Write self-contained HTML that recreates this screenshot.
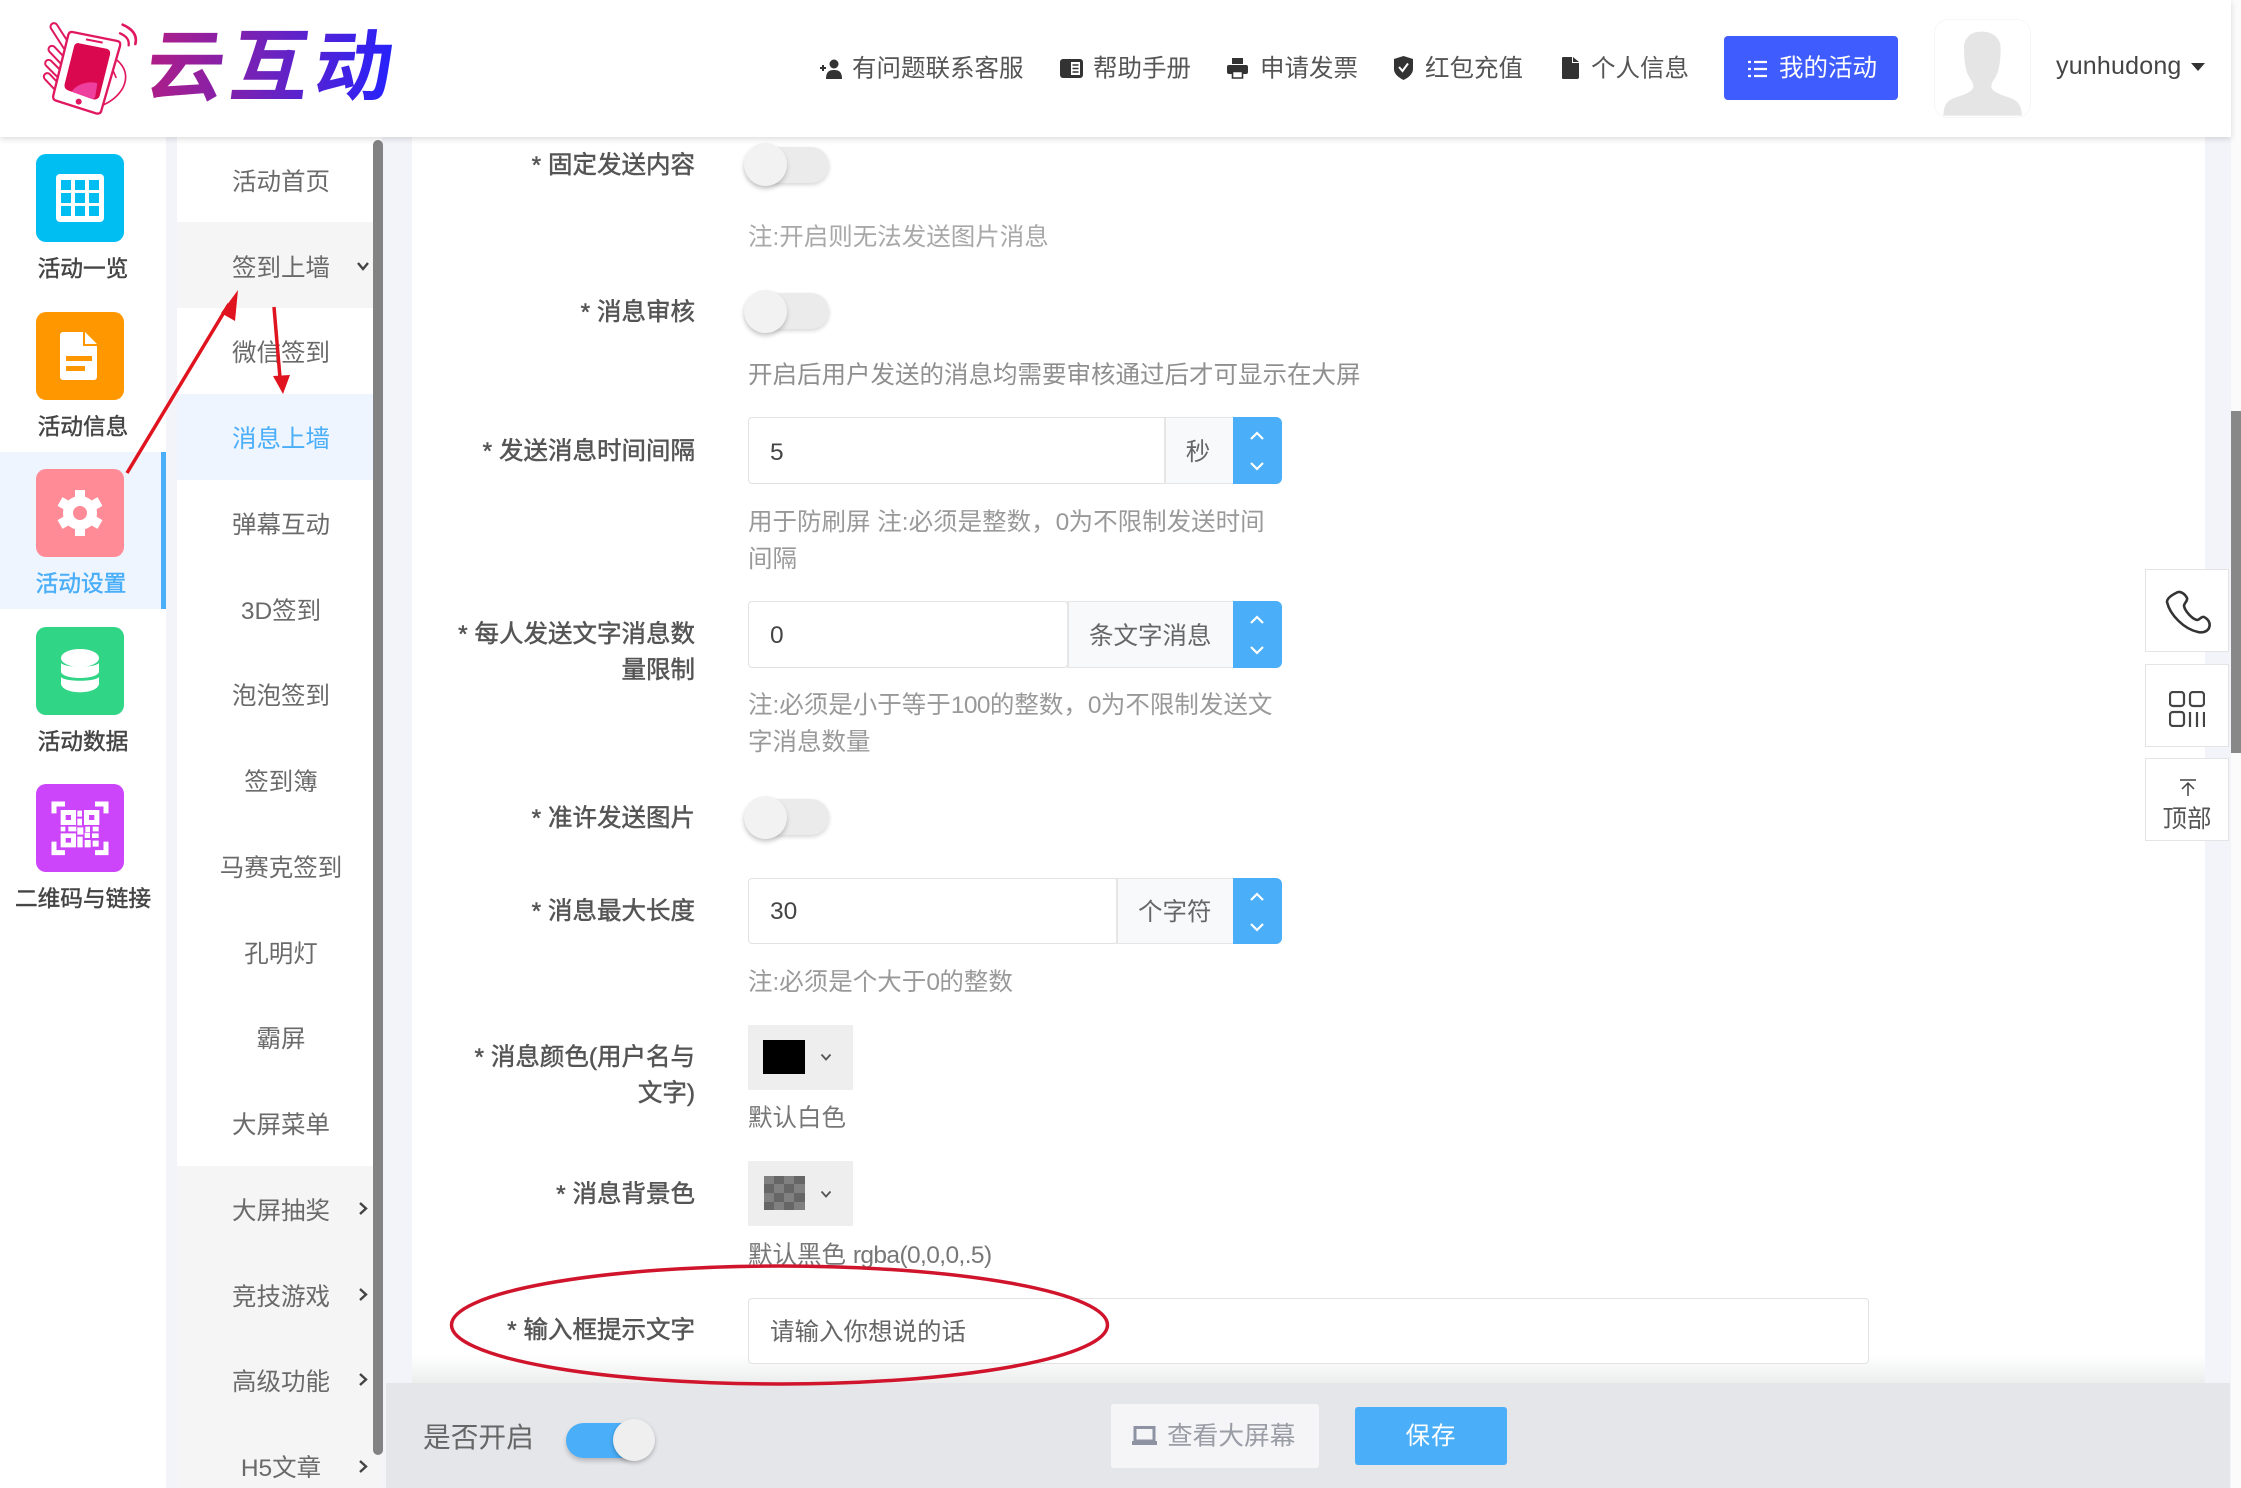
<!DOCTYPE html>
<html lang="zh-CN"><head><meta charset="utf-8"><title>云互动</title>
<style>
html,body{margin:0;padding:0;width:2241px;height:1488px;overflow:hidden;background:#f3f4f9}
body{position:relative;font-family:"Liberation Sans","Noto Sans CJK SC",sans-serif;font-size:24.5px;color:#666}
div,span,svg{position:absolute;box-sizing:border-box}
span.x{position:static;letter-spacing:-.6px}
.t{white-space:nowrap;transform:translateY(calc(-50% + 3px));line-height:1.3}
.c{text-align:center;transform:translate(-50%,calc(-50% + 3px))}
.l{color:#555;right:1546px;-webkit-text-stroke:.5px #555}
.n{color:#a8a8a8;left:748px}
.h{color:#555;transform:translateY(calc(-50% + 1.5px))}
.s{color:#444;-webkit-text-stroke:.45px #444;font-size:22.7px}
.m{color:#6a6a6a;left:281px}
.ic{width:88px;height:88px;left:36px;border-radius:10px}
.knob{width:43px;height:43px;border-radius:50%;background:#f2f2f2;box-shadow:0 3px 5px rgba(0,0,0,.2);left:744px}
.tr{width:83px;height:36px;border-radius:18px;background:#ebebeb;left:746px;box-shadow:0 2px 4px rgba(0,0,0,.16)}
.inp{background:#fff;border:1.5px solid #e2e2e2;border-radius:4px;left:748px}
.ad{background:#f8f9fb;border:1.5px solid #e6e6e6;border-left-width:2px;border-right:0}
.sp{background:#4aaef8;left:1233px;width:49px;border-radius:0 6px 6px 0}
.pk{background:#eeeeee;left:748px;width:105px}
.side{left:2145px;width:84px;height:83px;background:#fff;border:1.5px solid #e4e4e4}
</style></head><body>

<!-- main panel -->
<div style="left:412px;top:137px;width:1793px;height:1246px;background:#fff"></div>
<div style="left:412px;top:1355px;width:1793px;height:28px;background:linear-gradient(rgba(235,236,240,0),#eceded)"></div>

<!-- sidebar 1 -->
<div style="left:0;top:137px;width:166px;height:1351px;background:#fff"></div>
<div style="left:0;top:452px;width:166px;height:157px;background:#eef5fe"></div>
<div style="left:161px;top:452px;width:5px;height:157px;background:#4aaef8"></div>

<div class="ic" style="top:154px;background:#00bdf2"><svg style="left:20px;top:20px" width="48" height="48" viewBox="0 0 48 48"><rect width="48" height="48" rx="4" fill="#fff"/><g fill="#00bdf2"><rect x="5" y="6" width="10" height="10"/><rect x="19" y="6" width="10" height="10"/><rect x="33" y="6" width="10" height="10"/><rect x="5" y="19" width="10" height="10"/><rect x="19" y="19" width="10" height="10"/><rect x="33" y="19" width="10" height="10"/><rect x="5" y="32" width="10" height="10"/><rect x="19" y="32" width="10" height="10"/><rect x="33" y="32" width="10" height="10"/></g></svg></div>
<div class="t c s" style="left:83px;top:266px">活动一览</div>

<div class="ic" style="top:312px;background:#ff9800"><svg style="left:24px;top:20px" width="40" height="48" viewBox="0 0 40 48"><path d="M3 0H23V14H37V45a3 3 0 0 1-3 3H3a3 3 0 0 1-3-3V3a3 3 0 0 1 3-3z" fill="#fff"/><path d="M25 0L37 12H25z" fill="#fff"/><rect x="6" y="24" width="26" height="5" fill="#ff9800"/><rect x="6" y="34" width="19" height="5" fill="#ff9800"/></svg></div>
<div class="t c s" style="left:83px;top:424px">活动信息</div>

<div class="ic" style="top:469px;background:#ff8b97"><svg style="left:20px;top:20px" width="48" height="48" viewBox="0 0 48 48"><circle cx="24" cy="24" r="12" fill="none" stroke="#fff" stroke-width="10"/><g stroke="#fff" stroke-width="10"><path d="M24 1V9M24 39V47M4 12.500L11 16.500M37 31.500L44 35.500M4 35.500L11 31.500M37 16.500L44 12.500"/></g></svg></div>
<div class="t c" style="left:81px;top:581px;font-size:22.7px;color:#4aaef8;-webkit-text-stroke:.45px #4aaef8">活动设置</div>

<div class="ic" style="top:627px;background:#30d585"><svg style="left:24px;top:22px" width="40" height="44" viewBox="0 0 40 44"><g fill="#fff"><ellipse cx="20" cy="9" rx="19" ry="9"/><path d="M1 14c4 5 34 5 38 0v9c-2 8-36 8-38 0z"/><path d="M1 28c4 5 34 5 38 0v7c-2 11-36 11-38 0z"/></g></svg></div>
<div class="t c s" style="left:83px;top:739px">活动数据</div>

<div class="ic" style="top:784px;background:#cc45fb"><svg style="left:-16px;top:-14px" width="120" height="110" viewBox="0 0 360 330"><g fill="none" stroke="#fff" stroke-width="15"><path d="M102 130V102H135M225 102H258V130M102 215V248H135M225 248H258V215"/></g><path fill="#fff" fill-rule="evenodd" d="M122 120h46v45h-46zM137 135v15h16v-15zM192 120h46v45h-46zM207 135v15h16v-15zM172 122h14v18h-14zM172 146h14v20h-14zM122 190h46v42h-46zM137 204v14h16v-14zM122 170h14v14h-14zM145 170h24v14h-24zM172 172h18v22h-18zM196 170h14v16h-14zM218 170h18v14h-18zM172 200h16v32h-16zM194 188h16v16h-16zM216 190h20v14h-20zM194 210h18v22h-18zM218 212h18v18h-18z"/></svg></div>
<div class="t c s" style="left:83px;top:896px">二维码与链接</div>

<!-- sidebar 2 -->
<div style="left:177px;top:137px;width:205px;height:1351px;background:#fff"></div>
<div style="left:177px;top:222px;width:205px;height:86px;background:#f5f5f5"></div>
<div style="left:177px;top:394px;width:205px;height:86px;background:#eef5fe"></div>
<div style="left:177px;top:1166px;width:206px;height:322px;background:#f5f5f5"></div>
<div style="left:373px;top:140px;width:10px;height:1315px;background:#828282;border-radius:5px"></div>

<div class="t c m" style="top:180px">活动首页</div>
<div class="t c m" style="top:266px">签到上墙</div>
<div class="t c m" style="top:351px">微信签到</div>
<div class="t c m" style="top:437px;color:#4aaef8">消息上墙</div>
<div class="t c m" style="top:523px">弹幕互动</div>
<div class="t c m" style="top:609px">3D签到</div>
<div class="t c m" style="top:694px">泡泡签到</div>
<div class="t c m" style="top:780px">签到簿</div>
<div class="t c m" style="top:866px">马赛克签到</div>
<div class="t c m" style="top:952px">孔明灯</div>
<div class="t c m" style="top:1037px">霸屏</div>
<div class="t c m" style="top:1123px">大屏菜单</div>
<div class="t c m" style="top:1209px">大屏抽奖</div>
<div class="t c m" style="top:1295px">竞技游戏</div>
<div class="t c m" style="top:1380px">高级功能</div>
<div class="t c m" style="top:1466px">H5文章</div>
<svg style="left:357px;top:261px" width="12" height="10" viewBox="0 0 12 10"><path d="M1 2l5 6 5-6" fill="none" stroke="#444" stroke-width="2.400"/></svg>
<svg style="left:358px;top:1202px" width="10" height="13" viewBox="0 0 10 13"><path d="M2 1l6 5.500-6 5.500" fill="none" stroke="#444" stroke-width="2.400"/></svg>
<svg style="left:358px;top:1288px" width="10" height="13" viewBox="0 0 10 13"><path d="M2 1l6 5.500-6 5.500" fill="none" stroke="#444" stroke-width="2.400"/></svg>
<svg style="left:358px;top:1373px" width="10" height="13" viewBox="0 0 10 13"><path d="M2 1l6 5.500-6 5.500" fill="none" stroke="#444" stroke-width="2.400"/></svg>
<svg style="left:358px;top:1460px" width="10" height="13" viewBox="0 0 10 13"><path d="M2 1l6 5.500-6 5.500" fill="none" stroke="#444" stroke-width="2.400"/></svg>

<!-- form -->
<div class="t l" style="top:163px">* 固定发送内容</div>
<div class="tr" style="top:147px"></div><div class="knob" style="top:143px"></div>
<div class="t n" style="top:235px">注:开启则无法发送图片消息</div>

<div class="t l" style="top:310px">* 消息审核</div>
<div class="tr" style="top:293px"></div><div class="knob" style="top:290px"></div>
<div class="t n" style="top:373px;color:#8f8f8f">开启后用户发送的消息均需要审核通过后才可显示在大屏</div>

<div class="t l" style="top:449px">* 发送消息时间间隔</div>
<div class="inp" style="top:417px;width:420px;height:67px"></div>
<div class="t" style="left:770px;top:450px;color:#444">5</div>
<div class="ad" style="left:1164px;top:417px;width:70px;height:67px"></div>
<div class="t c" style="left:1198px;top:450px;color:#666">秒</div>
<div class="sp" style="top:417px;height:67px"><svg style="left:16px;top:14px" width="16" height="40" viewBox="0 0 16 40"><path d="M2 8l6-6 6 6M2 32l6 6 6-6" fill="none" stroke="#fff" stroke-width="2.200"/></svg></div>
<div class="t n" style="top:520px;color:#999">用于防刷屏 注:必须是整数，<span class="x">0</span>为不限制发送时间</div>
<div class="t n" style="top:557px;color:#999">间隔</div>

<div class="t l" style="top:632px">* 每人发送文字消息数</div>
<div class="t l" style="top:668px">量限制</div>
<div class="inp" style="top:601px;width:320px;height:67px"></div>
<div class="t" style="left:770px;top:633px;color:#444">0</div>
<div class="ad" style="left:1067px;top:601px;width:167px;height:67px"></div>
<div class="t" style="left:1089px;top:634px;color:#666">条文字消息</div>
<div class="sp" style="top:601px;height:67px"><svg style="left:16px;top:14px" width="16" height="40" viewBox="0 0 16 40"><path d="M2 8l6-6 6 6M2 32l6 6 6-6" fill="none" stroke="#fff" stroke-width="2.200"/></svg></div>
<div class="t n" style="top:703px;color:#999">注:必须是小于等于<span class="x">100</span>的整数，<span class="x">0</span>为不限制发送文</div>
<div class="t n" style="top:740px;color:#999">字消息数量</div>

<div class="t l" style="top:816px">* 准许发送图片</div>
<div class="tr" style="top:799px"></div><div class="knob" style="top:796px"></div>

<div class="t l" style="top:909px">* 消息最大长度</div>
<div class="inp" style="top:878px;width:370px;height:66px"></div>
<div class="t" style="left:770px;top:909px;color:#444">30</div>
<div class="ad" style="left:1116px;top:878px;width:118px;height:66px"></div>
<div class="t" style="left:1138px;top:910px;color:#666">个字符</div>
<div class="sp" style="top:878px;height:66px"><svg style="left:16px;top:14px" width="16" height="40" viewBox="0 0 16 40"><path d="M2 8l6-6 6 6M2 32l6 6 6-6" fill="none" stroke="#fff" stroke-width="2.200"/></svg></div>
<div class="t n" style="top:980px;color:#999">注:必须是个大于<span class="x">0</span>的整数</div>

<div class="t l" style="top:1055px">* 消息颜色(用户名与</div>
<div class="t l" style="top:1091px">文字)</div>
<div class="pk" style="top:1025px;height:65px"></div>
<div style="left:763px;top:1040px;width:42px;height:34px;background:#000"></div>
<svg style="left:820px;top:1053px" width="12" height="9" viewBox="0 0 12 9"><path d="M1.500 1.500L6 6.500l4.500-5" fill="none" stroke="#555" stroke-width="1.800"/></svg>
<div class="t n" style="top:1116px;color:#777">默认白色</div>

<div class="t l" style="top:1192px">* 消息背景色</div>
<div class="pk" style="top:1161px;height:65px"></div>
<svg style="left:764px;top:1176px" width="41" height="34" viewBox="0 0 41 34"><rect width="41" height="34" fill="#666"/><g fill="#808080"><rect x="0" y="0" width="10" height="8"/><rect x="20" y="0" width="10" height="8"/><rect x="10" y="8" width="10" height="9"/><rect x="30" y="8" width="11" height="9"/><rect x="0" y="17" width="10" height="9"/><rect x="20" y="17" width="10" height="9"/><rect x="10" y="26" width="10" height="8"/><rect x="30" y="26" width="11" height="8"/></g></svg>
<svg style="left:820px;top:1190px" width="12" height="9" viewBox="0 0 12 9"><path d="M1.500 1.500L6 6.500l4.500-5" fill="none" stroke="#555" stroke-width="1.800"/></svg>
<div class="t n" style="top:1253px;color:#777">默认黑色 <span class="x">rgba(0,0,0,.5)</span></div>

<div class="t l" style="top:1328px">* 输入框提示文字</div>
<div class="inp" style="top:1298px;width:1121px;height:66px"></div>
<div class="t" style="left:770px;top:1330px;color:#666">请输入你想说的话</div>

<!-- bottom bar -->
<div style="left:386px;top:1383px;width:1844px;height:105px;background:#e5e6ea"></div>
<div class="t" style="left:423px;top:1435px;font-size:27.700px;color:#666">是否开启</div>
<div style="left:566px;top:1423px;width:74px;height:35px;border-radius:18px;background:#4aaef8;box-shadow:0 3px 5px rgba(0,0,0,.2)"></div>
<div style="left:613px;top:1419px;width:42px;height:42px;border-radius:50%;background:#efefef;box-shadow:0 2px 4px rgba(0,0,0,.25)"></div>
<div style="left:1111px;top:1404px;width:208px;height:64px;background:#f5f5f7;border-radius:3px"></div>
<svg style="left:1132px;top:1425px" width="25" height="21" viewBox="0 0 25 21"><path d="M3 2.500H22V16H3z" fill="none" stroke="#8d93a3" stroke-width="3"/><rect y="16" width="25" height="4" fill="#8d93a3"/></svg>
<div class="t" style="left:1167px;top:1434px;font-size:25.700px;color:#9a9da6">查看大屏幕</div>
<div style="left:1355px;top:1407px;width:152px;height:58px;background:#4aaef8;border-radius:3px"></div>
<div class="t c" style="left:1431px;top:1434px;color:#fff;letter-spacing:1px">保存</div>

<!-- header -->
<div style="left:2231px;top:0;width:10px;height:1488px;background:#fbfbfb"></div>
<div style="left:2231px;top:411px;width:10px;height:342px;background:#888"></div>
<div style="left:0;top:0;width:2231px;height:137px;background:#fff;box-shadow:0 2px 6px rgba(0,0,0,.14)"></div>

<!-- logo -->
<svg style="left:30px;top:10px" width="120" height="115" viewBox="0 0 360 345">
 <g fill="none" stroke-linecap="round">
  <g stroke="#e0185f" stroke-width="27"><path d="M72 50L112 112M66 118L104 158M56 160L96 200M52 200L86 236"/></g>
  <g stroke="#fff" stroke-width="15"><path d="M72 50L112 112M66 118L104 158M56 160L96 200M52 200L86 236"/></g>
  <path d="M258 148C286 170 296 200 278 235C262 262 238 278 212 288" stroke="#e0185f" stroke-width="5"/>
  <path d="M246 175L258 202" stroke="#e0185f" stroke-width="5"/>
  <path d="M278 44C310 58 322 78 316 102" stroke="#e0185f" stroke-width="8"/>
  <path d="M270 70C288 78 298 88 296 106" stroke="#e0185f" stroke-width="7"/>
 </g>
 <path d="M127 66L262 93C270 95 272 100 270 108L214 302C212 310 206 312 198 310L78 272C70 269 68 262 70 256L115 74C117 68 120 65 127 66z" fill="#fff" stroke="#e0185f" stroke-width="7" stroke-linejoin="round"/>
 <path d="M148 100L228 116C238 118 242 124 240 134L210 254C208 266 198 270 190 268L116 242C106 238 102 232 104 222L132 110C134 102 140 98 148 100z" fill="#d9084f"/>
 <path d="M125 245C140 222 175 212 202 220L196 258C194 268 188 268 182 266z" fill="#ee3f9f"/>
 <circle cx="146" cy="275" r="9" fill="#e0185f"/>
 <path d="M168 88L218 98" stroke="#e0185f" stroke-width="6"/>
</svg>
<div class="t" style="left:147px;top:68px;font-size:78px;font-weight:700;line-height:1.15;letter-spacing:6px;background:linear-gradient(90deg,#b01e86,#6a22c0 50%,#2222ff);-webkit-background-clip:text;background-clip:text;color:transparent;transform:translateY(-50%) skewX(-7deg)">云互动</div>

<svg style="left:820px;top:59px" width="22" height="20" viewBox="0 0 22 20"><circle cx="14" cy="5" r="4.500" fill="#333"/><path d="M6 20c0-7 3-9 8-9s8 2 8 9z" fill="#333"/><path d="M0 9h6M3 6v6" stroke="#333" stroke-width="2"/></svg>
<div class="t h" style="left:852px;top:68px">有问题联系客服</div>
<svg style="left:1060px;top:59px" width="23" height="19" viewBox="0 0 23 19"><rect width="23" height="19" rx="3" fill="#333"/><rect x="11" y="3" width="9" height="13" fill="#fff"/><path d="M12.500 6h6M12.500 9.500h6M12.500 13h6" stroke="#333" stroke-width="1.500"/></svg>
<div class="t h" style="left:1093px;top:68px">帮助手册</div>
<svg style="left:1227px;top:58px" width="21" height="21" viewBox="0 0 21 21"><rect x="5" y="0" width="11" height="6" fill="#333"/><rect y="7" width="21" height="9" rx="2" fill="#333"/><path d="M5.500 13.500h10v6.500h-10z" fill="#fff" stroke="#333" stroke-width="1.600"/></svg>
<div class="t h" style="left:1260px;top:68px">申请发票</div>
<svg style="left:1394px;top:56px" width="19" height="24" viewBox="0 0 19 24"><path d="M0 3l9.500-3L19 3v10c0 5-5 9-9.500 11C5 22 0 18 0 13z" fill="#333"/><path d="M5 11l3.500 4L14 7.500" fill="none" stroke="#fff" stroke-width="2"/></svg>
<div class="t h" style="left:1425px;top:68px">红包充值</div>
<svg style="left:1562px;top:57px" width="17" height="22" viewBox="0 0 17 22"><path d="M1 0h9v6h7v14a2 2 0 0 1-2 2H1a1 1 0 0 1-1-1V1a1 1 0 0 1 1-1z" fill="#333"/><path d="M11 0l6 5h-6z" fill="#333"/></svg>
<div class="t h" style="left:1591px;top:68px">个人信息</div>
<div style="left:1724px;top:36px;width:174px;height:64px;background:#3f5cff;border-radius:4px"></div>
<svg style="left:1748px;top:60px" width="19" height="18" viewBox="0 0 19 18"><path d="M6 2h13M6 9h13M6 16h13" stroke="#fff" stroke-width="2.200"/><path d="M0 2h3M0 9h3M0 16h3" stroke="#fff" stroke-width="2.200"/></svg>
<div class="t" style="left:1779px;top:66px;color:#fff">我的活动</div>
<div style="left:1934px;top:19px;width:97px;height:99px;background:#fff;border:1px solid #f6f6f6;border-radius:14px"></div>
<svg style="left:1920px;top:10px" width="130" height="115" viewBox="0 0 390 345"><path d="M185 65c35 0 57 20 57 50 0 30-3 55-10 75-8 20-18 25-18 40 0 15 30 25 60 35 20 8 30 20 32 52H70c2-32 10-44 30-52 30-10 60-20 60-35 0-15-10-20-18-40-7-20-10-45-10-75 0-30 18-50 53-50z" fill="#e5e5e5"/></svg>
<div class="t" style="left:2056px;top:63px;color:#444;letter-spacing:.2px;font-size:25px">yunhudong</div>
<svg style="left:2191px;top:63px" width="14" height="9" viewBox="0 0 14 9"><path d="M0 0h14L7 8z" fill="#333"/></svg>

<!-- side buttons -->
<div class="side" style="top:569px"><svg style="left:19px;top:20px" width="46" height="46" viewBox="0 0 46 46"><path d="M11 3c4-3 9 1 11 5 1 3-3 5-3 8 1 5 8 13 13 14 3 0 4-4 7-3 4 2 7 6 5 11-2 4-7 5-11 4C19 39 5 25 2 12 2 8 7 5 11 3z" fill="none" stroke="#333" stroke-width="2.600" stroke-linejoin="round"/></svg></div>
<div class="side" style="top:664px"><svg style="left:23px;top:26px" width="36" height="36" viewBox="0 0 36 36"><g fill="none" stroke="#444" stroke-width="2.200"><rect x="1" y="1" width="14" height="14" rx="3"/><rect x="21" y="1" width="14" height="14" rx="3"/><rect x="1" y="21" width="14" height="14" rx="3"/><path d="M21 21v15M28 21v15M35 21v15"/></g></svg></div>
<div class="side" style="top:758px"><svg style="left:34px;top:20px" width="16" height="17" viewBox="0 0 16 17"><path d="M0 1h16M8 17V4M2 10l6-6 6 6" fill="none" stroke="#444" stroke-width="1.500"/></svg><div class="t c" style="left:41px;top:58px;color:#555;white-space:nowrap">顶部</div></div>

<!-- annotations -->
<svg style="left:0;top:0" width="2241" height="1488" viewBox="0 0 2241 1488">
 <ellipse cx="779.500" cy="1325" rx="328" ry="59" fill="none" stroke="#d0142c" stroke-width="3.500"/>
 <path d="M127 473L229 304" stroke="#e0141f" stroke-width="3.500" fill="none"/>
 <path d="M238 290L221 313 235 321z" fill="#e0141f"/>
 <path d="M274 307L280 378" stroke="#e0141f" stroke-width="3.500" fill="none"/>
 <path d="M283 394L273 376 290 375z" fill="#e0141f"/>
</svg>
</body></html>
